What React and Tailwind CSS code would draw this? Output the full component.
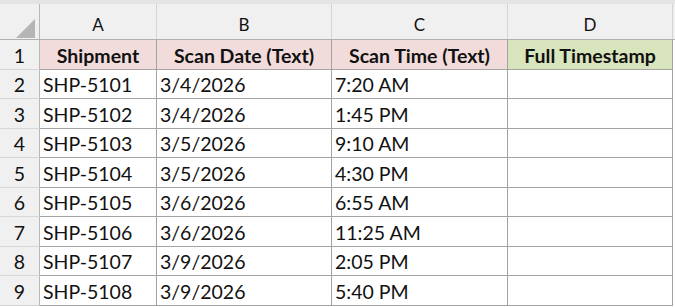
const columns = [
  { letter: 'A', width: 'w-[117px]', title: 'Shipment', fill: 'bg-[#f2dcdb]' },
  { letter: 'B', width: 'w-[175px]', title: 'Scan Date (Text)', fill: 'bg-[#f2dcdb]' },
  { letter: 'C', width: 'w-[176px]', title: 'Scan Time (Text)', fill: 'bg-[#f2dcdb]' },
  { letter: 'D', width: 'w-[165px]', title: 'Full Timestamp', fill: 'bg-[#d8e4bc]' },
];

const rows = [
  ['SHP-5101', '3/4/2026', '7:20 AM'],
  ['SHP-5102', '3/4/2026', '1:45 PM'],
  ['SHP-5103', '3/5/2026', '9:10 AM'],
  ['SHP-5104', '3/5/2026', '4:30 PM'],
  ['SHP-5105', '3/6/2026', '6:55 AM'],
  ['SHP-5106', '3/6/2026', '11:25 AM'],
  ['SHP-5107', '3/9/2026', '2:05 PM'],
  ['SHP-5108', '3/9/2026', '5:40 PM'],
];

// heights alternate so the lines land on the 29.5px rhythm of the screenshot
const rowHeights = ['h-[29px]', 'h-[30px]', 'h-[29px]', 'h-[30px]', 'h-[29px]', 'h-[30px]', 'h-[29px]', 'h-[30px]'];

function RowHeader({ n, height }) {
  return (
    <div
      className={`w-[40px] ${height} shrink-0 bg-[#f0f0f0] border-r border-r-[#b8b8b8] border-b border-b-[#d6d6d6] flex items-end justify-center pb-[4px] leading-none text-[19.5px]`}
    >
      {n}
    </div>
  );
}

export default function App() {
  return (
    <div
      className="w-[675px] h-[307px] bg-white overflow-hidden text-[#111]"
      style={{ fontFamily: 'Lato, "Liberation Sans", sans-serif' }}
    >
      {/* strip above the column letters */}
      <div className="h-[4px] bg-[#e4e4e4]" />

      {/* column letters */}
      <div className="flex h-[36px] bg-[#f0f0f0] border-b border-[#b0b0b0]">
        <div className="w-[40px] shrink-0 border-r border-[#b8b8b8] relative">
          <svg className="absolute left-[16px] top-[15px]" width="19" height="19" viewBox="0 0 19 19">
            <polygon points="19,0 19,19 0,19" fill="#b5b5b5" />
          </svg>
        </div>
        {columns.map((c) => (
          <div
            key={c.letter}
            className={`${c.width} shrink-0 border-r border-[#d4d4d4] flex items-end justify-center pb-[6px] leading-none text-[17px]`}
          >
            {c.letter}
          </div>
        ))}
        <div className="flex-1" />
      </div>

      {/* header row */}
      <div className="flex h-[30px]">
        <RowHeader n={1} height="h-[30px]" />
        {columns.map((c) => (
          <div
            key={c.title}
            className={`${c.width} shrink-0 ${c.fill} border-r border-b border-[#a3a3a3] flex items-end justify-center pb-[4px] leading-none font-bold text-[19.5px]`}
          >
            {c.title}
          </div>
        ))}
      </div>

      {/* data rows */}
      {rows.map((r, i) => (
        <div key={r[0]} className={`flex ${rowHeights[i]}`}>
          <RowHeader n={i + 2} height={rowHeights[i]} />
          {columns.map((c, j) => (
            <div
              key={c.letter}
              className={`${c.width} shrink-0 border-r border-b border-[#a3a3a3] flex items-end pl-[3px] pb-[4px] leading-none text-[19.5px]`}
            >
              {r[j] || ''}
            </div>
          ))}
        </div>
      ))}
    </div>
  );
}
